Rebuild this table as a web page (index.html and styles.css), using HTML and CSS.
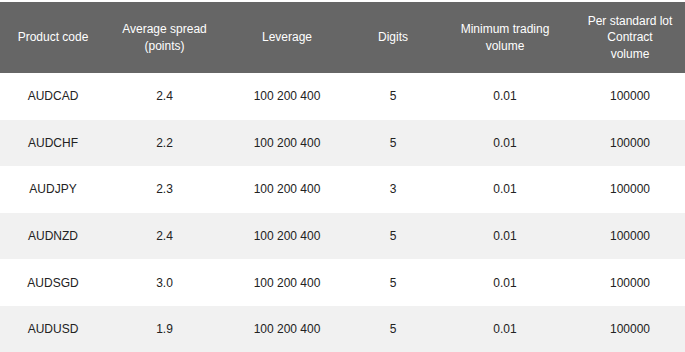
FILE: index.html
```html
<!DOCTYPE html>
<html lang="en">
  <head>
    <meta charset="UTF-8" />
    <meta name="viewport" content="width=device-width, initial-scale=1.0" />
    <title>Trading products</title>
    <link rel="stylesheet" href="styles.css">
  </head>
  <body>
    <div class="table-wrap">
      <table class="spec-table">
        <colgroup>
          <col class="col-code" />
          <col class="col-spread" />
          <col class="col-leverage" />
          <col class="col-digits" />
          <col class="col-min" />
          <col class="col-lot" />
        </colgroup>
        <thead>
          <tr>
            <th>Product code</th>
            <th>Average spread<br />(points)</th>
            <th>Leverage</th>
            <th>Digits</th>
            <th>Minimum trading<br />volume</th>
            <th>Per standard lot<br />Contract<br />volume</th>
          </tr>
        </thead>
        <tbody>
          <tr>
            <td>AUDCAD</td><td>2.4</td><td>100 200 400</td><td>5</td><td>0.01</td><td>100000</td>
          </tr>
          <tr>
            <td>AUDCHF</td><td>2.2</td><td>100 200 400</td><td>5</td><td>0.01</td><td>100000</td>
          </tr>
          <tr>
            <td>AUDJPY</td><td>2.3</td><td>100 200 400</td><td>3</td><td>0.01</td><td>100000</td>
          </tr>
          <tr>
            <td>AUDNZD</td><td>2.4</td><td>100 200 400</td><td>5</td><td>0.01</td><td>100000</td>
          </tr>
          <tr>
            <td>AUDSGD</td><td>3.0</td><td>100 200 400</td><td>5</td><td>0.01</td><td>100000</td>
          </tr>
          <tr>
            <td>AUDUSD</td><td>1.9</td><td>100 200 400</td><td>5</td><td>0.01</td><td>100000</td>
          </tr>
        </tbody>
      </table>
    </div>
  </body>
</html>
```

FILE: styles.css
```css
body {
  font-family: "Liberation Sans", Arial, sans-serif;
  margin: 0;
  background-color: #fff;
  color: #222;
}

.table-wrap {
  padding-top: 2px;
}

.spec-table {
  width: 685px;
  border-collapse: collapse;
  table-layout: fixed;
  font-size: 12px;
}

.col-code { width: 106px; }
.col-spread { width: 117px; }
.col-leverage { width: 128px; }
.col-digits { width: 84px; }
.col-min { width: 140px; }
.col-lot { width: 110px; }

.spec-table th {
  height: 71px;
  padding: 0 4px;
  background-color: #666;
  color: #fff;
  font-weight: normal;
  line-height: 16.5px;
  text-align: center;
  vertical-align: middle;
}

.spec-table td {
  height: 46.6px;
  padding: 0 4px;
  text-align: center;
  vertical-align: middle;
}

.spec-table tbody tr:nth-child(even) td {
  background-color: #f1f1f1;
}
```
